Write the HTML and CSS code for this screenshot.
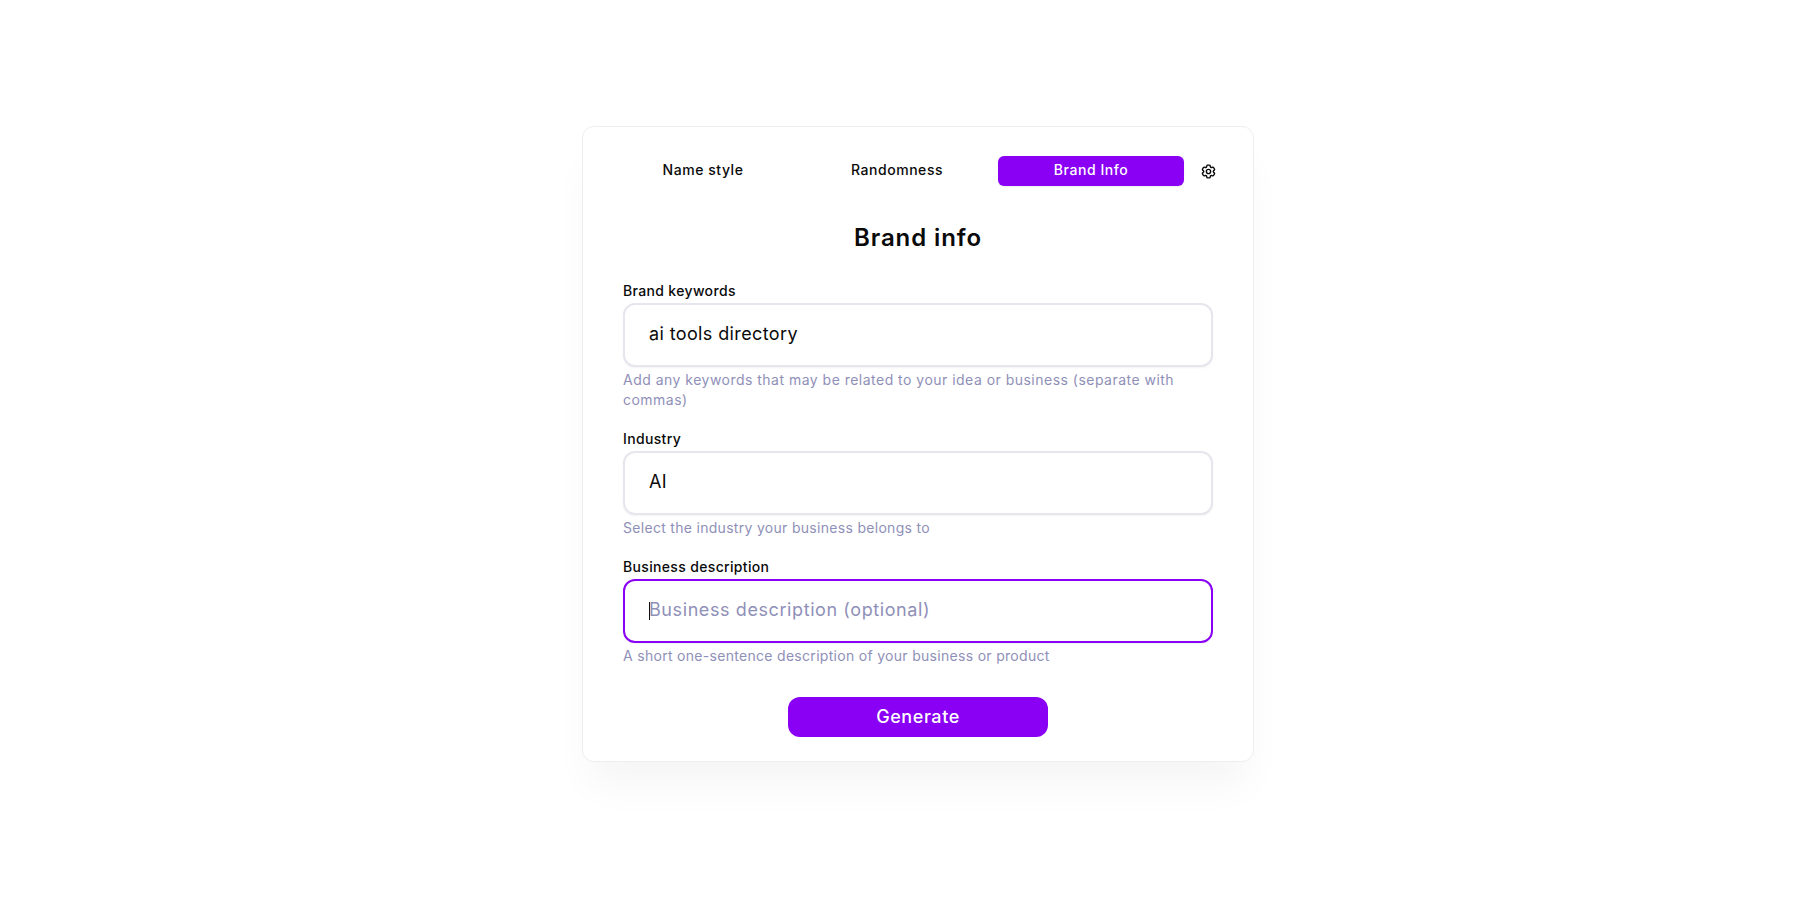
FILE: index.html
```html
<!DOCTYPE html>
<html lang="en">
<head>
<meta charset="utf-8">
<title>Brand info</title>
<link rel="stylesheet" href="styles.css">
</head>
<body>
<main class="page">
  <section class="card">
    <nav class="tabs">
      <button class="tab" type="button">Name style</button>
      <button class="tab" type="button">Randomness</button>
      <button class="tab tab-active" type="button">Brand Info</button>
      <button class="gear" type="button" aria-label="Settings">
        <svg viewBox="0 0 24 24" width="17" height="17" fill="none" stroke="currentColor" stroke-width="2" stroke-linecap="round" stroke-linejoin="round"><path d="M9.594 3.94c.09-.542.56-.94 1.11-.94h2.593c.55 0 1.02.398 1.11.94l.213 1.281c.063.374.313.686.645.87.074.04.147.083.22.127.325.196.72.257 1.075.124l1.217-.456a1.125 1.125 0 0 1 1.37.49l1.296 2.247a1.125 1.125 0 0 1-.26 1.431l-1.003.827c-.293.241-.438.613-.43.992a7.723 7.723 0 0 1 0 .255c-.008.378.137.75.43.991l1.004.827c.424.35.534.955.26 1.43l-1.298 2.247a1.125 1.125 0 0 1-1.369.491l-1.217-.456c-.355-.133-.75-.072-1.076.124a6.47 6.47 0 0 1-.22.128c-.331.183-.581.495-.644.869l-.213 1.281c-.09.543-.56.94-1.11.94h-2.594c-.55 0-1.019-.398-1.11-.94l-.213-1.281c-.062-.374-.312-.686-.644-.87a6.52 6.52 0 0 1-.22-.127c-.325-.196-.72-.257-1.076-.124l-1.217.456a1.125 1.125 0 0 1-1.369-.49l-1.297-2.247a1.125 1.125 0 0 1 .26-1.431l1.004-.827c.292-.24.437-.613.43-.991a6.932 6.932 0 0 1 0-.255c.007-.38-.138-.751-.43-.992l-1.004-.827a1.125 1.125 0 0 1-.26-1.43l1.297-2.247a1.125 1.125 0 0 1 1.37-.491l1.216.456c.356.133.751.072 1.076-.124.072-.044.146-.086.22-.128.332-.183.582-.495.644-.869l.214-1.28Z"/><path d="M15 12a3 3 0 1 1-6 0 3 3 0 0 1 6 0Z"/></svg>
      </button>
    </nav>
    <h1 class="title">Brand info</h1>
    <form class="form">
      <div class="field">
        <label class="label" for="kw">Brand keywords</label>
        <input class="input" id="kw" type="text" value="ai tools directory">
        <p class="help help-wide">Add any keywords that may be related to your idea or business (separate with commas)</p>
      </div>
      <div class="field">
        <label class="label" for="ind">Industry</label>
        <input class="input" id="ind" type="text" value="AI">
        <p class="help">Select the industry your business belongs to</p>
      </div>
      <div class="field">
        <label class="label" for="desc">Business description</label>
        <div class="input-wrap">
          <input class="input input-focus" id="desc" type="text" placeholder="Business description (optional)">
          <span class="caret"></span>
        </div>
        <p class="help">A short one-sentence description of your business or product</p>
      </div>
      <button class="generate" type="button">Generate</button>
    </form>
  </section>
</main>
</body>
</html>
```
FILE: styles.css
```css
* { box-sizing: border-box; }
html, body { margin: 0; background: #fff; }
body { font-family: Inter, "Noto Sans", sans-serif; color: #0a0a0a; }
.page { display: flex; justify-content: center; padding: 126px 0 0 43px; min-height: 904px; }
.card {
  width: 672px; height: 636px; padding: 29px 40px 24px;
  background: #fff; border: 1px solid #eeeef2; border-radius: 12px;
  box-shadow: 0 30px 40px -8px rgba(0, 0, 0, 0.045);
}
.tabs { display: flex; align-items: center; gap: 8px; margin: 0 -20px 0 -13px; }
.tab {
  flex: none; width: 186px; height: 30px; padding: 0 0 2px; border: 0; border-radius: 6px; background: transparent;
  font: 500 14px/20px Inter, sans-serif; color: #0a0a0a; letter-spacing: 0.55px;
}
.tab-active { background: #8a00f5; color: #fff; box-shadow: 0 1px 2px rgba(0, 0, 0, 0.08); }
.gear { display: flex; padding: 0; margin-left: 8px; border: 0; background: transparent; color: #0a0a0a; }
.title { margin: 36px 0 27px; text-align: center; font: 600 24px/32px Inter, sans-serif; color: #0a0a0a; letter-spacing: 0.9px; }
.field { margin-bottom: 19px; }
.label { display: block; margin-bottom: 2px; font: 500 14px/20px Inter, sans-serif; color: #0a0a0a; letter-spacing: 0.34px; }
.input {
  display: block; width: 100%; height: 64px; padding: 0 24px 3px; border: 2px solid #e6e6ee; border-radius: 12px;
  outline: 0; background: #fff; font: 400 18px/28px Inter, sans-serif; color: #0a0a0a; letter-spacing: 0.38px;
  box-shadow: 0 1px 2px rgba(0, 0, 0, 0.05);
}
.input::placeholder { color: #8f90b8; opacity: 1; letter-spacing: 0.59px; }
.input-focus { border-color: #8a00f5; }
.input-wrap { position: relative; }
.caret { position: absolute; left: 26px; top: 23px; width: 1px; height: 18px; background: #111; }
.help { margin: 3px 0 0; font: 400 14px/20px Inter, sans-serif; color: #8f90b8; letter-spacing: 0.3px; }
.help-wide { letter-spacing: 0.48px; }
.form { display: block; }
.generate {
  display: block; width: 260px; height: 40px; margin: 31px auto 0; padding: 0 0 1px; border: 0; border-radius: 12px;
  background: #8a00f5; color: #fff; font: 500 18px/28px Inter, sans-serif; letter-spacing: 0.57px;
}
```
